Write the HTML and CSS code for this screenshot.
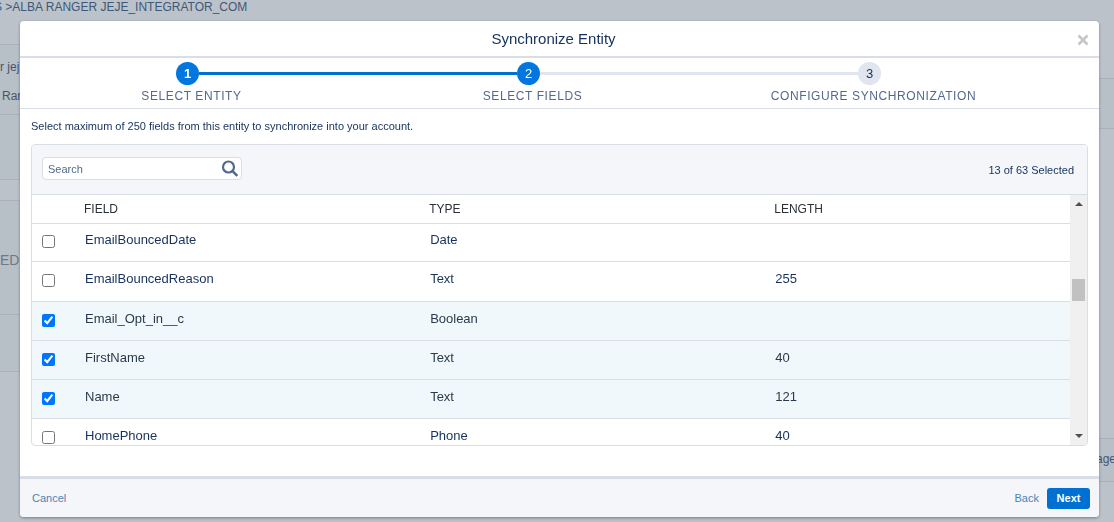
FILE: index.html
```html
<!DOCTYPE html>
<html lang="en">
<head>
<meta charset="utf-8">
<title>Synchronize Entity</title>
<link rel="stylesheet" href="styles.css">
</head>
<body>
<div class="page">
  <nav class="crumbs"><a class="crumb-link" href="#">S</a> &gt;ALBA RANGER JEJE_INTEGRATOR_COM</nav>
  <div class="columns">
    <div class="side side-left">
      <section class="panel person"><span>r jej</span><span>Ran</span></section>
      <section class="panel blank"></section>
      <div class="space"></div>
      <section class="panel group">ED</section>
      <section class="panel rest"></section>
    </div>
    <div class="side side-right">
      <section class="panel summary"></section>
      <div class="space gap-tall"></div>
      <section class="panel pager">age</section>
    </div>
  </div>
</div>

<div class="modal" role="dialog" aria-labelledby="modal-title">
  <header class="modal-head">
    <h1 class="modal-title" id="modal-title">Synchronize Entity</h1>
    <button class="close" type="button" aria-label="Close">
      <svg width="12" height="12" viewBox="0 0 12 12"><path d="M1.500 1.500l9 9M10.500 1.500l-9 9" stroke="#c6c6c6" stroke-width="2.600" fill="none"/></svg>
    </button>
  </header>

  <ol class="steps">
    <li class="step done">
      <div class="track"><i class="line none"></i><span class="dot">1</span><i class="line"></i></div>
      <span class="step-label">SELECT ENTITY</span>
    </li>
    <li class="step current">
      <div class="track"><i class="line"></i><span class="dot">2</span><i class="line off"></i></div>
      <span class="step-label">SELECT FIELDS</span>
    </li>
    <li class="step todo">
      <div class="track"><i class="line off"></i><span class="dot">3</span><i class="line none"></i></div>
      <span class="step-label">CONFIGURE SYNCHRONIZATION</span>
    </li>
  </ol>

  <main class="modal-body">
    <p class="intro">Select maximum of 250 fields from this entity to synchronize into your account.</p>
    <div class="box">
      <div class="toolbar">
        <div class="search">
          <input class="search-input" type="text" placeholder="Search" aria-label="Search">
          <svg class="search-icon" width="18" height="18" viewBox="0 0 18 18"><circle cx="7.500" cy="7" r="5.500" fill="none" stroke="#54698d" stroke-width="2.200"/><path d="M11.300 10.800l5 5" stroke="#54698d" stroke-width="2.600"/></svg>
        </div>
        <span class="count">13 of 63 Selected</span>
      </div>
      <div class="list">
        <div class="viewport">
          <table class="fields">
            <colgroup><col class="col-check"><col class="col-main"><col class="col-main"><col></colgroup>
            <thead>
              <tr><th></th><th>FIELD</th><th>TYPE</th><th>LENGTH</th></tr>
            </thead>
            <tbody>
              <tr class="first"><td class="check"><input type="checkbox" id="f1"></td><td><label for="f1">EmailBouncedDate</label></td><td>Date</td><td></td></tr>
              <tr class="second"><td class="check"><input type="checkbox" id="f2"></td><td><label for="f2">EmailBouncedReason</label></td><td>Text</td><td>255</td></tr>
              <tr class="picked"><td class="check"><input type="checkbox" id="f3" checked></td><td><label for="f3">Email_Opt_in__c</label></td><td>Boolean</td><td></td></tr>
              <tr class="picked"><td class="check"><input type="checkbox" id="f4" checked></td><td><label for="f4">FirstName</label></td><td>Text</td><td>40</td></tr>
              <tr class="picked"><td class="check"><input type="checkbox" id="f5" checked></td><td><label for="f5">Name</label></td><td>Text</td><td>121</td></tr>
              <tr><td class="check"><input type="checkbox" id="f6"></td><td><label for="f6">HomePhone</label></td><td>Phone</td><td>40</td></tr>
            </tbody>
          </table>
        </div>
        <div class="scrollbar" aria-hidden="true">
          <svg width="8" height="4" viewBox="0 0 8 4"><path d="M0 4L4 0L8 4z" fill="#505050"/></svg>
          <div class="scroll-track">
            <i class="before"></i><i class="thumb"></i><i class="after"></i>
          </div>
          <svg width="8" height="4" viewBox="0 0 8 4"><path d="M0 0L4 4L8 0z" fill="#505050"/></svg>
        </div>
      </div>
    </div>
  </main>

  <footer class="modal-foot">
    <button class="text-btn" type="button">Cancel</button>
    <div class="foot-right">
      <button class="text-btn" type="button">Back</button>
      <button class="next" type="button">Next</button>
    </div>
  </footer>
</div>
</body>
</html>
```
FILE: styles.css
```css
* { box-sizing: border-box; }

body {
  margin: 0;
  font-family: "Liberation Sans", Arial, sans-serif;
  font-size: 13px;
  color: #16325c;
  background: #bbc2ca;
  overflow: hidden;
}

button, input { font-family: inherit; }

/* Dimmed page behind the dialog */
.page {
  height: 100vh;
  display: flex;
  flex-direction: column;
  font-size: 12px;
  color: #3f5878;
}
.crumbs {
  height: 44px;
  line-height: 14px;
  margin-left: -6px;
}
.crumb-link { color: #2f6796; text-decoration: none; }
.columns { flex: 1; display: flex; justify-content: space-between; }
.side { width: 20px; white-space: nowrap; }
.side-right { width: 18px; padding-top: 34px; }
.panel {
  background: #b7bfc7;
  border-top: 1px solid #a9b1bc;
  color: #46566e;
}
.person { height: 70px; padding-top: 15px; line-height: 14px; display: flex; flex-direction: column; gap: 15px; }
.person span:last-child { padding-left: 2px; }
.blank { height: 66px; border-bottom: 1px solid #a9b1bc; }
.space { height: 20px; }
.group { height: 114px; padding-top: 50px; font-size: 14px; line-height: 18px; color: #6f7985; }
.rest { height: 58px; border-bottom: 1px solid #a9b1bc; }
.summary { height: 51px; border-bottom: 1px solid #a9b1bc; }
.gap-tall { height: 309px; }
.pager { height: 44px; border-bottom: 1px solid #a9b1bc; line-height: 40px; }

/* Dialog */
.modal {
  position: fixed;
  top: 21px;
  right: 15px;
  bottom: 5px;
  left: 20px;
  display: flex;
  flex-direction: column;
  background: #fff;
  border-radius: 4px;
  box-shadow: 0 1px 3px rgba(0, 0, 0, 0.35);
  overflow: hidden;
}
.modal-head {
  display: flex;
  align-items: center;
  height: 37px;
  padding: 0 10px 0 10px;
  border-bottom: 2px solid #d8dde6;
}
.modal-title {
  flex: 1;
  margin: 0;
  text-align: center;
  font-size: 15px;
  font-weight: 400;
}
.close {
  display: flex;
  padding: 0;
  margin-top: 3px;
  border: 0;
  background: none;
}

.steps {
  display: grid;
  grid-template-columns: repeat(3, 1fr);
  margin: 0;
  padding: 4px 55px 4px 1px;
  list-style: none;
  border-bottom: 1px solid #d8dde6;
}
.track { display: flex; align-items: center; margin: 0 4px 0 -4px; }
.line { flex: 1; height: 3px; background: #0070d2; }
.line.off { background: #e0e5ee; }
.line.none { background: none; }
.dot {
  width: 23px;
  height: 23px;
  border-radius: 50%;
  background: #0176de;
  color: #fff;
  line-height: 23px;
  text-align: center;
}
.done .dot { font-weight: 700; }
.todo .dot { background: #e0e5ee; color: #16325c; }
.step-label {
  display: block;
  padding-top: 4px;
  text-align: center;
  font-size: 12px;
  line-height: 15px;
  letter-spacing: 0.05em;
  color: #54698d;
}

.modal-body {
  flex: 1;
  min-height: 0;
  display: flex;
  flex-direction: column;
  padding: 10px 11px 30px;
}
.intro { margin: 0; font-size: 11px; line-height: 15px; color: #16325c; }
.box {
  flex: 1;
  min-height: 0;
  display: flex;
  flex-direction: column;
  margin-top: 10px;
  border: 1px solid #d8dde6;
  border-radius: 4px;
  overflow: hidden;
}
.toolbar {
  display: flex;
  justify-content: space-between;
  align-items: center;
  height: 50px;
  padding: 0 13px 0 10px;
  background: #f4f6f9;
  border-bottom: 1px solid #d8dde6;
}
.search {
  display: flex;
  align-items: center;
  width: 200px;
  height: 23px;
  padding: 0 2px 0 5px;
  margin-bottom: 2px;
  border: 1px solid #d8dde6;
  border-radius: 4px;
  background: #fff;
}
.search-input {
  flex: 1;
  min-width: 0;
  padding: 0;
  border: 0;
  outline: 0;
  background: none;
  font-size: 11px;
}
.search-input::placeholder { color: #54698d; opacity: 1; }
.count { font-size: 11px; }

.list { flex: 1; min-height: 0; display: flex; }
.viewport { flex: 1; overflow: hidden; }
.fields { width: 100%; table-layout: fixed; border-collapse: separate; border-spacing: 0; }
.col-check { width: 42px; }
.col-main { width: 33.25%; }
.fields th {
  height: 29px;
  padding: 0 10px;
  border-bottom: 1px solid #d8dde6;
  text-align: left;
  font-size: 12px;
  font-weight: 400;
  color: #2b2f36;
}
.fields td {
  height: 39px;
  padding: 9px 11px 0;
  border-bottom: 1px solid #d8dde6;
  vertical-align: top;
  line-height: 16px;
}
.fields .check { padding: 12px 10px 0; line-height: 0; }
.fields .first td { height: 38px; padding-top: 8px; }
.fields .first .check { padding-top: 11px; }
.fields .second td { height: 40px; }
.check input { width: 13px; height: 13px; margin: 0; }
.picked td { background: #f0f8fc; color: #2b3a4a; }

.scrollbar {
  width: 17px;
  display: flex;
  flex-direction: column;
  align-items: center;
  padding: 7px 0;
  background: #f0f0f0;
}
.scroll-track { flex: 1; display: flex; flex-direction: column; width: 13px; padding: 6px 0; }
.before { flex: 67; }
.thumb { height: 22px; background: #c1c1c1; }
.after { flex: 127; }

.modal-foot {
  display: flex;
  justify-content: space-between;
  align-items: center;
  height: 41px;
  padding: 0 9px 0 12px;
  background: #f4f6f9;
  border-top: 3px solid #d8dde6;
}
.foot-right { display: flex; align-items: center; gap: 8px; }
.text-btn {
  padding: 0;
  border: 0;
  background: none;
  font-size: 11px;
  color: #5083b5;
}
.next {
  width: 43px;
  height: 21px;
  padding: 0;
  border: 0;
  border-radius: 3px;
  background: #0070d2;
  color: #fff;
  font-size: 11px;
  font-weight: 700;
}
```
